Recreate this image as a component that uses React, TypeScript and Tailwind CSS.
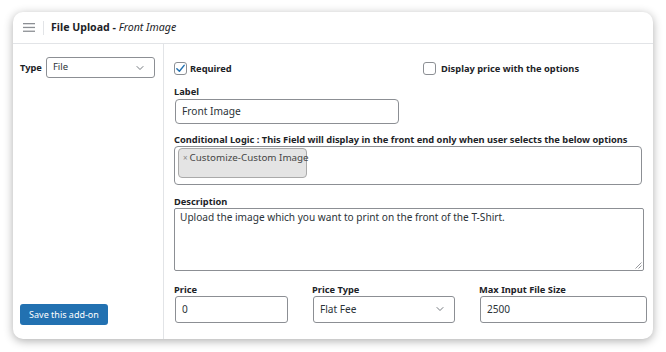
import { ChevronDown } from 'lucide-react'

const font = { fontFamily: '"Noto Sans", "Open Sans", sans-serif' }

function Checkbox({ checked }: { checked?: boolean }) {
  return (
    <span className="flex h-[13px] w-[13px] shrink-0 items-center justify-center rounded-[3px] border border-[#8c8f94] bg-white">
      {checked ? (
        <svg width="11" height="11" viewBox="0 0 12 12" fill="none">
          <path d="M2 6.2 L4.8 9 L10 2.6" stroke="#2271b1" strokeWidth="1.6" strokeLinecap="round" strokeLinejoin="round" />
        </svg>
      ) : null}
    </span>
  )
}

function FieldLabel({ children }: { children: React.ReactNode }) {
  return <p className="whitespace-nowrap text-[9.3px] font-bold leading-[13px] text-[#1d2327]">{children}</p>
}

export default function App() {
  return (
    <div className="min-h-[352px] bg-white pl-[13px] pt-[12px]" style={font}>
      <div className="flex h-[327px] w-[640px] flex-col overflow-hidden rounded-[10px] bg-white shadow-[0_2px_10px_rgba(0,0,0,0.32)]">
        <div className="flex h-[32px] shrink-0 items-center border-b border-[#e2e4e7]">
          <svg className="ml-[10px]" width="12" height="9" viewBox="0 0 12 9">
            <rect x="0" y="0" width="12" height="1.3" fill="#8c8f94" />
            <rect x="0" y="3.8" width="12" height="1.3" fill="#8c8f94" />
            <rect x="0" y="7.6" width="12" height="1.3" fill="#8c8f94" />
          </svg>
          <span className="ml-[8px] h-[14px] w-px bg-[#e2e4e7]" />
          <p className="ml-[7px] whitespace-nowrap text-[10.6px] leading-none text-[#1d2327]">
            <span className="font-bold">File Upload - </span>
            <span className="italic">Front Image</span>
          </p>
        </div>

        <div className="flex min-h-0 flex-1">
          <aside className="flex w-[151px] shrink-0 flex-col justify-between border-r border-[#e2e4e7] px-[7px] pb-[14px] pt-[13px]">
            <div className="flex items-center gap-[4px]">
              <span className="text-[9.3px] font-bold text-[#1d2327]">Type</span>
              <div className="flex h-[21px] w-[109px] items-center justify-between rounded-[3px] border border-[#8c8f94] pl-[6px] pr-[8px] text-[9.5px] text-[#2c3338]">
                File
                <ChevronDown size={12} strokeWidth={1.6} color="#50575e" />
              </div>
            </div>
            <button
              type="button"
              className="h-[21px] w-[88px] whitespace-nowrap rounded-[3px] bg-[#2271b1] text-[9px] text-white"
            >
              Save this add-on
            </button>
          </aside>

          <main className="flex-1 pl-[10px] pr-[8px] pt-[18px]">
            <div className="flex items-center">
              <div className="flex w-[249px] items-center gap-[3px]">
                <Checkbox checked />
                <span className="text-[9.3px] font-bold text-[#1d2327]">Required</span>
              </div>
              <div className="flex items-center gap-[5px]">
                <Checkbox />
                <span className="whitespace-nowrap text-[9.3px] font-bold text-[#1d2327]">Display price with the options</span>
              </div>
            </div>

            <div className="mt-[9px]">
              <FieldLabel>Label</FieldLabel>
              <div className="ml-px mt-[1px] flex h-[25px] w-[224px] items-center rounded-[4px] border border-[#8c8f94] px-[6px] text-[10.2px] text-[#2c3338]">
                Front Image
              </div>
            </div>

            <div className="mt-[9px]">
              <FieldLabel>Conditional Logic : This Field will display in the front end only when user selects the below options</FieldLabel>
              <div className="mt-0 h-[39px] w-[468px] rounded-[4px] border border-[#8c8f94] px-[3px] pt-[1px]">
                <div className="flex h-[30px] w-[129px] items-start whitespace-nowrap rounded-[4px] border border-[#aaaaaa] bg-[#e4e4e4] px-[4px] pt-[2px] text-[9.8px] leading-[14px] text-[#444]">
                  <span className="mr-[2px] text-[8px] leading-[14px] text-[#888]">×</span>
                  Customize-Custom Image
                </div>
              </div>
            </div>

            <div className="mt-[10px]">
              <FieldLabel>Description</FieldLabel>
              <div className="relative h-[63px] w-[470px] rounded-[2px] border border-[#8c8f94] px-[5px] pt-[1px] text-[10.1px] leading-[14px] text-[#2c3338]">
                Upload the image which you want to print on the front of the T-Shirt.
                <svg className="absolute bottom-[1px] right-[1px]" width="7" height="7" viewBox="0 0 7 7">
                  <path d="M6.5 0.5 L0.5 6.5 M6.5 3.5 L3.5 6.5" stroke="#8c8f94" strokeWidth="0.9" />
                </svg>
              </div>
            </div>

            <div className="mt-[12px] flex">
              <div className="w-[138px]">
                <FieldLabel>Price</FieldLabel>
                <div className="ml-px flex h-[27px] w-[113px] items-center rounded-[3px] border border-[#8c8f94] px-[6px] text-[10.1px] text-[#2c3338]">
                  0
                </div>
              </div>
              <div className="w-[167px]">
                <FieldLabel>Price Type</FieldLabel>
                <div className="ml-px flex h-[27px] w-[142px] items-center justify-between rounded-[3px] border border-[#8c8f94] pl-[6px] pr-[8px] text-[10.1px] text-[#2c3338]">
                  Flat Fee
                  <ChevronDown size={12} strokeWidth={1.6} color="#50575e" />
                </div>
              </div>
              <div>
                <FieldLabel>Max Input File Size</FieldLabel>
                <div className="ml-px flex h-[27px] w-[167px] items-center rounded-[3px] border border-[#8c8f94] px-[6px] text-[10.1px] text-[#2c3338]">
                  2500
                </div>
              </div>
            </div>
          </main>
        </div>
      </div>
    </div>
  )
}
